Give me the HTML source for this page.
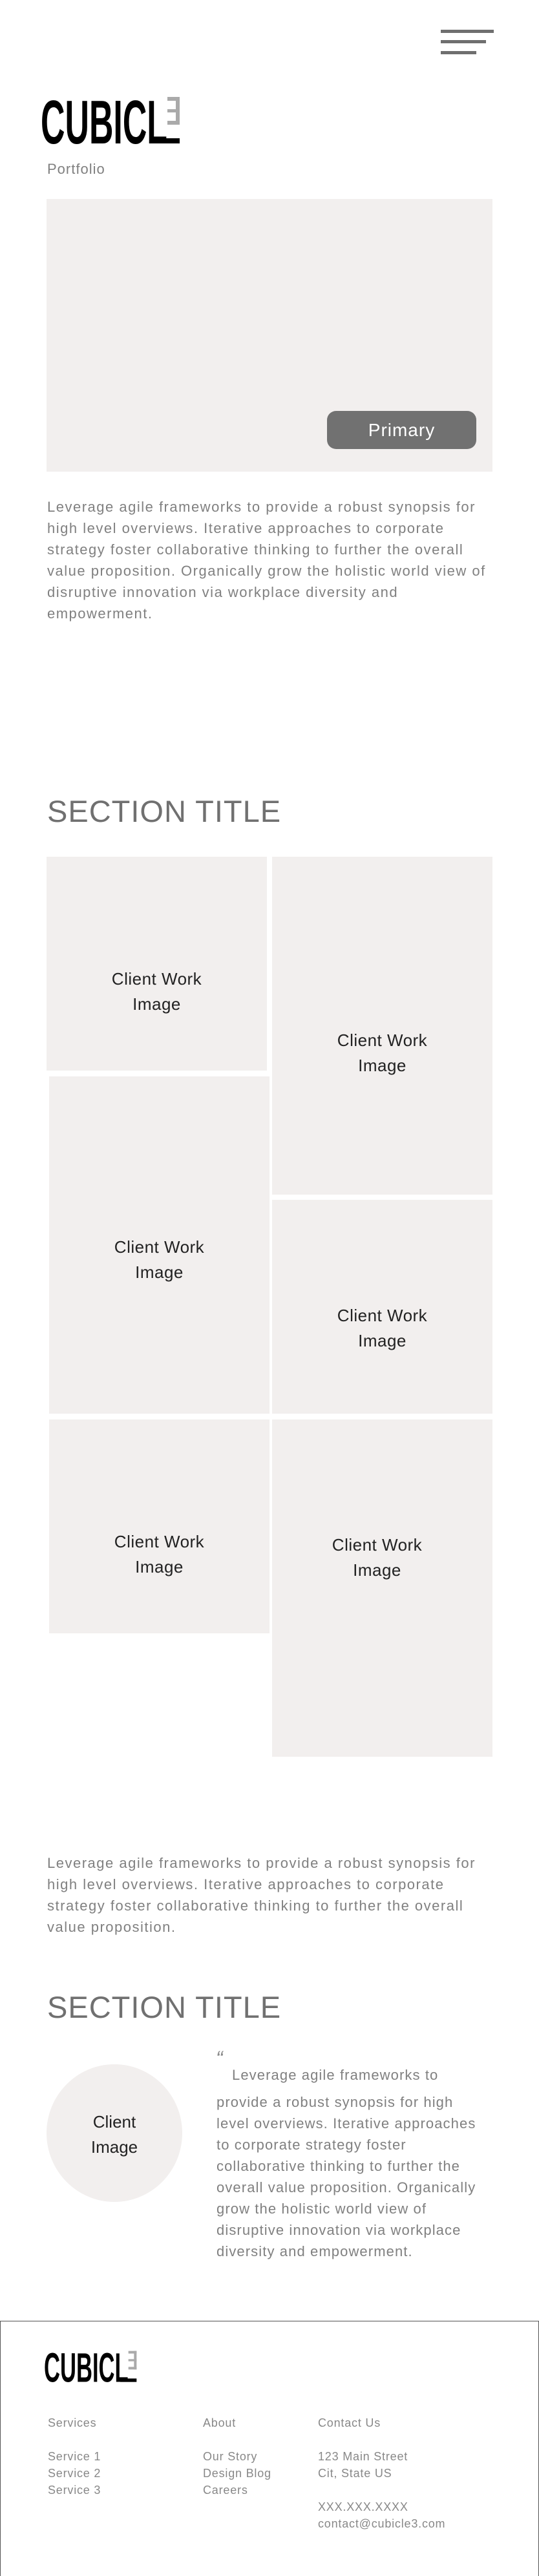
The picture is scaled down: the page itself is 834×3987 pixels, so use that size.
<!DOCTYPE html>
<html><head><meta charset="utf-8"><style>
*{margin:0;padding:0;box-sizing:border-box}
body{width:834px;height:3987px;position:relative;background:#fff;font-family:"Liberation Sans",sans-serif;color:#777;overflow:hidden}
.a{position:absolute}
.p{font-size:22px;line-height:33px;color:#808080;letter-spacing:1.5px}
.box{position:absolute;background:#f2efee}
.cw{position:absolute;left:0;right:0;text-align:center;font-size:26px;line-height:39px;color:#222;letter-spacing:0.5px}
.h{font-size:47px;color:#707070;letter-spacing:1px;line-height:60px}
.f{font-size:18px;line-height:26px;color:#888;letter-spacing:0.8px}
.bar{position:absolute;height:5px;background:#6f6f6f;right:70px}
</style></head><body>
<div class="bar" style="top:46px;width:82px"></div>
<div class="bar" style="top:62px;width:70px;right:82px"></div>
<div class="bar" style="top:79px;width:55px;right:97px"></div>

<svg class="a" style="left:60px;top:140px" width="240" height="100" viewBox="0 0 240 100">
<text x="3" y="82" font-family="Liberation Sans" font-weight="bold" font-size="96" textLength="196" lengthAdjust="spacingAndGlyphs" fill="#000">CUBICL</text>
<rect x="180" y="74" width="38" height="8" fill="#000"/>
<rect x="212" y="10" width="6" height="43" fill="#aaa"/>
<rect x="199" y="10" width="19" height="6" fill="#aaa"/>
<rect x="199" y="29" width="19" height="5" fill="#aaa"/>
<rect x="199" y="47" width="19" height="6" fill="#aaa"/>
</svg>
<div class="a" style="left:73px;top:249px;font-size:22px;color:#808080;letter-spacing:1px">Portfolio</div>

<div class="box" style="left:72px;top:308px;width:690px;height:422px"></div>
<div class="a" style="left:506px;top:636px;width:231px;height:59px;background:#717171;border-radius:14px;color:#fff;font-size:28px;line-height:59px;text-align:center;letter-spacing:1px">Primary</div>

<div class="a p" style="left:73px;top:768px;width:700px">Leverage agile frameworks to provide a robust synopsis for high level overviews. Iterative approaches to corporate strategy foster collaborative thinking to further the overall value proposition. Organically grow the holistic world view of disruptive innovation via workplace diversity and empowerment.</div>

<div class="a h" style="left:73px;top:1226px">SECTION TITLE</div>

<div class="box" style="left:72px;top:1326px;width:341px;height:331px"><div class="cw" style="top:170px">Client Work<br>Image</div></div>
<div class="box" style="left:76px;top:1666px;width:341px;height:522px"><div class="cw" style="top:245px">Client Work<br>Image</div></div>
<div class="box" style="left:76px;top:2197px;width:341px;height:331px"><div class="cw" style="top:170px">Client Work<br>Image</div></div>
<div class="box" style="left:421px;top:1326px;width:341px;height:523px"><div class="cw" style="top:265px">Client Work<br>Image</div></div>
<div class="box" style="left:421px;top:1857px;width:341px;height:331px"><div class="cw" style="top:160px">Client Work<br>Image</div></div>
<div class="box" style="left:421px;top:2197px;width:341px;height:522px"><div class="cw" style="top:175px;left:-16px">Client Work<br>Image</div></div>

<div class="a p" style="left:73px;top:2867px;width:700px">Leverage agile frameworks to provide a robust synopsis for high level overviews. Iterative approaches to corporate strategy foster collaborative thinking to further the overall value proposition.</div>

<div class="a h" style="left:73px;top:3077px">SECTION TITLE</div>

<div class="a" style="left:72px;top:3195px;width:210px;height:213px;border-radius:50%;background:#f2efee;text-align:center;padding-top:70px;font-size:26px;line-height:39px;color:#222">Client<br>Image</div>

<div class="a" style="left:334px;top:3168px;font-size:32px;font-style:italic;color:#888">“</div>
<div class="a p" style="left:335px;top:3195px;width:440px;letter-spacing:1.1px"><span style="padding-left:24px"></span>Leverage agile frameworks to<div style="height:9px"></div>provide a robust synopsis for high<br>level overviews. Iterative approaches<br>to corporate strategy foster<br>collaborative thinking to further the<br>overall value proposition. Organically<br>grow the holistic world view of<br>disruptive innovation via workplace<br>diversity and empowerment.</div>

<div class="a" style="left:0;top:3592px;width:834px;height:395px;border:1px solid #555;border-bottom:none"></div>
<svg class="a" style="left:66px;top:3625px" width="160" height="70" viewBox="0 0 240 100">
<text x="3" y="90" font-family="Liberation Sans" font-weight="bold" font-size="96" textLength="196" lengthAdjust="spacingAndGlyphs" fill="#000">CUBICL</text>
<rect x="180" y="82" width="38" height="8" fill="#000"/>
<rect x="212" y="18" width="6" height="43" fill="#aaa"/>
<rect x="199" y="18" width="19" height="6" fill="#aaa"/>
<rect x="199" y="37" width="19" height="5" fill="#aaa"/>
<rect x="199" y="55" width="19" height="6" fill="#aaa"/>
</svg>
<div class="a f" style="left:74px;top:3737px">Services<br><br style="line-height:14px">Service 1<br>Service 2<br>Service 3</div>
<div class="a f" style="left:314px;top:3737px">About<br><br style="line-height:14px">Our Story<br>Design Blog<br>Careers</div>
<div class="a f" style="left:492px;top:3737px">Contact Us<br><br style="line-height:14px">123 Main Street<br>Cit, State US<br><br style="line-height:0">XXX.XXX.XXXX<br>contact@cubicle3.com</div>
</body></html>
